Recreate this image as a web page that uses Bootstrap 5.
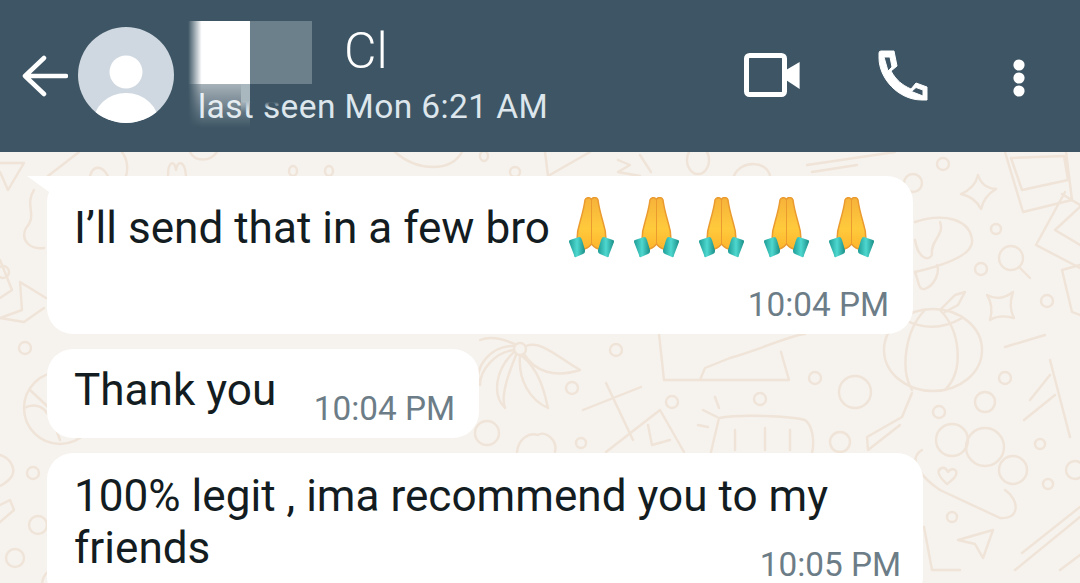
<!DOCTYPE html>
<html lang="en">
<head>
  <meta charset="UTF-8" />
  <title>Chat</title>
  <link href="https://cdn.jsdelivr.net/npm/bootstrap@5.3.0/dist/css/bootstrap.min.css" rel="stylesheet" />
  <style>
    body { background: #f6f2ee; font-family: Roboto, "Liberation Sans", sans-serif; }
    .chat-page { height: 583px; }
    .chat-head { height: 152px; background: #3d5564; color: #fff; padding-left: 22px; flex-shrink: 0; }
    .avatar-pic { margin-left: 10px; width: 96px; height: 96px; margin-top: -2px; }
    .peer-info { margin-left: 24px; width: 420px; }
    .peer-name { font-size: 50px; font-weight: 300; line-height: 56px; padding-left: 146px; margin-top: -4px; }
    .peer-seen { font-size: 33.5px; line-height: 36px; color: #dce6ec; margin-top: 10px; white-space: nowrap; letter-spacing: .4px; }
    .blur-white { position: absolute; left: 188px; top: 21px; width: 62px; height: 63px; background: linear-gradient(90deg, rgba(255,255,255,0), #fff 22%); }
    .blur-gray { position: absolute; left: 250px; top: 21px; width: 62px; height: 63px; background: #6b808b; }
    .blur-fade { position: absolute; left: 188px; top: 84px; width: 62px; height: 44px; background: linear-gradient(90deg, rgba(61,85,100,0), rgba(255,255,255,.55) 22%); -webkit-mask-image: linear-gradient(#000, transparent); mask-image: linear-gradient(#000, transparent); }
    .blur-patch { position: absolute; left: 241px; top: 84px; width: 9px; height: 28px; background: linear-gradient(#a9b7bf 60%, rgba(110,130,142,0)); }
    .blur-hole { position: absolute; left: 250px; top: 84px; width: 31px; height: 24px; background: linear-gradient(#3d5564 75%, rgba(61,85,100,0)); }
    .head-icons { position: absolute; left: 744px; top: 50px; }
    .icon-video { margin-top: 3px; }
    .icon-phone { margin-left: 78px; }
    .icon-dots { margin-left: 85px; margin-top: 9px; }
    .chat-body { flex: 1; padding: 24px 0 0 47px; gap: 15px; overflow: hidden; }
    .doodle-bg { position: absolute; left: 0; top: 152px; }
    .msg-bubble { background: #fff; border-radius: 26px; color: #131c21; font-size: 44.1px; line-height: 52px; position: relative; flex-shrink: 0; }
    .msg-tail::before { content: ""; position: absolute; left: -20px; top: 0; width: 44px; height: 32px; background: #fff; clip-path: polygon(0 0, 100% 0, 100% 100%); }
    .msg-time { font-size: 33.3px; line-height: 36px; color: #6c7d87; white-space: nowrap; }
    .msg-one { width: 866px; height: 158px; padding: 21px 24px 0 27px; }
    .msg-one .msg-time { margin-top: 29px; }
    .msg-two { width: 432px; height: 89px; padding: 15px 24px 0 27px; }
    .msg-two .msg-time { margin-top: 27px; }
    .msg-three { width: 876px; height: 150px; padding: 17px 22px 0 27px; }
    .msg-three .msg-time { margin-top: 25px; }
    .pray-row { gap: 20px; margin-left: 19px; }
    .msg-line { white-space: nowrap; }
  </style>
</head>
<body>
  <div class="chat-page d-flex flex-column position-relative overflow-hidden">
    <!-- header -->
    <header class="chat-head d-flex align-items-center position-relative">
      <svg width="46" height="42" viewBox="0 0 46 42" fill="none" stroke="#fff" stroke-width="4.5" stroke-linecap="round" stroke-linejoin="round"><path d="M44 21H4M22 3 3 21l19 18"/></svg>
      <svg class="avatar-pic" viewBox="0 0 96 96"><defs><clipPath id="avaClip"><circle cx="48" cy="48" r="48"/></clipPath></defs><circle cx="48" cy="48" r="48" fill="#cfd8e0"/><circle cx="48" cy="45" r="16.5" fill="#fff"/><ellipse cx="48" cy="97" rx="33" ry="31" fill="#fff" clip-path="url(#avaClip)"/></svg>
      <div class="peer-info">
        <div class="peer-name">Cl</div>
        <div class="peer-seen">last seen Mon 6:21 AM</div>
      </div>
      <div class="blur-fade"></div>
      <div class="blur-patch"></div>
      <div class="blur-hole"></div>
      <div class="blur-white"></div>
      <div class="blur-gray"></div>
      <div class="head-icons d-flex align-items-start">
        <svg class="icon-video" width="56" height="44" viewBox="0 0 56 44"><rect x="2.5" y="2.5" width="38" height="39" rx="3" fill="none" stroke="#fff" stroke-width="5"/><path d="M42 17 55.6 9v27L42 27z" fill="#fff"/></svg>
        <svg class="icon-phone" width="50" height="51" viewBox="0 0 50 51"><path fill="#fff" fill-rule="evenodd" stroke="#fff" stroke-linejoin="round" d="M1 3Q1 1 3 1H16L19 16 13 21C18 30 24 35 33 39L38 33 49 37V50H44C20 50 1 28 1 8ZM6 7 10 21 14 17 12 7ZM33.500 41.500 45 46V40L38 37.500Z"/></svg>
        <svg class="icon-dots" width="12" height="38" viewBox="0 0 12 38" fill="#fff"><circle cx="6" cy="6" r="5.6"/><circle cx="6" cy="19" r="5.6"/><circle cx="6" cy="32" r="5.6"/></svg>
      </div>
    </header>

    <!-- wallpaper doodles, coordinates are page pixels -->
    <svg class="doodle-bg" width="1080" height="431" viewBox="0 152 1080 431" fill="none" stroke="#efe4d7" stroke-width="2.4" stroke-linejoin="round" stroke-linecap="round">
      <!-- top strip -->
      <path d="M48 176 79 152M122 152C128 160 128 170 126 176M90 176C93 165 102 165 108 176M168 176C168 160 175 160 176 170 177 160 185 160 186 176M190 152C195 162 210 162 217 152M395 152C418 172 451 172 462 152M545 152 548 176 590 152M618 160 630 165 618 172 640 176M640 155 651 172M734 176C740 160 767 160 770 176M807 165 895 152M812 172 857 165"/>
      <ellipse cx="293" cy="171" rx="4" ry="5"/><ellipse cx="329" cy="171" rx="4" ry="5"/><ellipse cx="484" cy="156" rx="4" ry="5"/><ellipse cx="515" cy="172" rx="5" ry="5"/><ellipse cx="698" cy="160" rx="11" ry="14"/>
      <!-- left edge -->
      <path d="M0 163H24L8 190 0 172M34 190C24 205 38 215 26 228 20 240 30 250 44 248M0 260 12 290 0 298M0 318 22 310 20 282 46 298M0 318 24 322 44 308M0 455C10 458 16 468 12 476 8 482 4 484 0 486M0 505 10 500 14 510 0 522"/>
      <circle cx="3" cy="272" r="6"/><circle cx="25" cy="348" r="6"/><circle cx="60" cy="408" r="36"/><path d="M24 408C40 400 50 410 60 440M30 390 62 420"/><circle cx="33" cy="473" r="6"/><circle cx="38" cy="525" r="9"/><circle cx="15" cy="558" r="9"/><circle cx="60" cy="585" r="18"/>
      <!-- right top -->
      <circle cx="943" cy="164" r="6"/><circle cx="913" cy="183" r="9"/>
      <path d="M978 175Q982 188 996 189 984 196 981 209 975 197 961 194 975 188 978 175Z"/>
      <path d="M1005 152 1023 212 1072 200 1066 152M1011 158 1022 190 1068 180 1064 156 1011 158M1065 192 1036 245 1080 268M1080 205 1062 194M1082 205 1055 230 1080 245"/>
      <path d="M915 222C945 212 970 220 972 240 974 255 945 265 915 272M940 222C945 235 930 240 932 255 928 262 918 258 915 240M915 272C920 285 918 290 925 289 935 285 940 272 937 265"/>
      <circle cx="996" cy="229" r="5"/><circle cx="981" cy="269" r="6"/><circle cx="1011" cy="258" r="12"/><path d="M1020 268 1030 278"/>
      <path d="M987 295Q1000 302 1013 292 1008 307 1014 318 1000 314 990 320 994 306 987 295Z"/>
      <circle cx="1047" cy="301" r="6"/><path d="M1062 270 1080 265M1062 270 1072 312 1080 315"/>
      <!-- ball and tail -->
      <ellipse cx="933" cy="350" rx="49" ry="41"/><path d="M925 310C905 330 900 370 912 390M940 310C960 330 965 370 945 390M905 320C925 330 945 328 962 318M940 310 955 295 965 292 958 305 945 312M912 393 902 417 867 437 868 450 900 425"/>
      <!-- bottom right -->
      <path d="M1005 347 1045 335M1050 360 1070 437M1030 400 1050 375M1024 420 1055 395M922 450C905 460 925 480 940 490L1000 518C1020 520 1020 500 1005 490M947 484C938 476 936 470 942 468 945 467 947 470 948 472 950 469 954 468 956 471 958 476 952 480 947 484ZM958 540 993 530 983 558 975 544ZM1015 570 1080 517M1022 553 1080 507M924 527 932 570 960 570M1060 570 1080 555"/>
      <circle cx="952" cy="440" r="16"/><circle cx="985" cy="447" r="19"/><circle cx="1013" cy="470" r="14"/>
      <circle cx="985" cy="402" r="10"/><circle cx="1005" cy="378" r="6"/><circle cx="939" cy="412" r="6"/><circle cx="1040" cy="444" r="5"/><circle cx="1048" cy="484" r="5"/><circle cx="952" cy="517" r="5"/><circle cx="1075" cy="470" r="9"/>
      <!-- middle band -->
      <circle cx="616" cy="350" r="6"/><circle cx="572" cy="388" r="6"/><circle cx="815" cy="378" r="6"/><circle cx="855" cy="392" r="16"/><circle cx="760" cy="399" r="6"/><circle cx="672" cy="402" r="6"/><circle cx="487" cy="433" r="12"/><circle cx="581" cy="443" r="5"/><circle cx="840" cy="442" r="10"/><circle cx="520" cy="349" r="6"/>
      <path d="M515 344C500 338 490 336 480 340M526 346C540 340 555 355 580 370 555 378 535 372 524 354M522 356C540 370 545 395 548 408 530 400 518 380 520 356M516 355C510 370 500 395 505 408 492 395 495 370 514 352M514 350C495 352 480 370 480 385 472 370 490 345 514 346"/>
      <path d="M659 334 664 380H789L781 352M700 380 705 368 730 358C760 350 790 335 805 334"/>
      <path d="M583 410 641 387M606 383 633 440M606 452 660 410 684 452M648 425 652 445 670 440"/>
      <path d="M711 452 719 418C740 414 790 416 805 420 812 425 815 440 812 453M703 410 717 417M715 397 719 408M698 425 708 427M735 430V450M765 428V450M790 430V450"/>
      <path d="M517 452C518 440 528 432 538 435 545 430 558 440 555 452"/>
    </svg>

    <!-- messages -->
    <main class="chat-body d-flex flex-column position-relative">
      <div class="msg-bubble msg-tail msg-one">
        <div class="d-flex align-items-center">
          <span class="msg-line">I’ll send that in a few bro</span>
          <div class="pray-row d-flex">
            <svg width="0" height="0" class="position-absolute"><defs>
              <linearGradient id="handGrad" x1="0" y1="0" x2="0" y2="1"><stop offset="0" stop-color="#f6b23a"/><stop offset=".6" stop-color="#ffca3c"/><stop offset="1" stop-color="#fdb52c"/></linearGradient>
              <linearGradient id="cuffGrad" x1="0" y1="0" x2="1" y2="0"><stop offset="0" stop-color="#1f9d96"/><stop offset=".5" stop-color="#4ed8cf"/><stop offset="1" stop-color="#1b8f88"/></linearGradient>
              <symbol id="prayHands" viewBox="0 0 45 61">
                <path d="M16 3c1-3 5-3 6.500-.5C24-.5 28 0 29 3c1 8 3 15 5 22 2 6 3 12 3 18l-6 9c-3 0-6-2-8.500-5-2.500 3-5.500 5-8.500 5L8 43c0-6 1-12 3-18 2-7 4-14 5-22z" fill="url(#handGrad)" stroke="#ea9a2e" stroke-width="1.500"/>
                <path d="M22.500 3v44" stroke="#ea9a2e" stroke-width="1" fill="none"/>
                <path d="M1 43l9-3c2 0 2 1 3 3l3 10c0 2 0 3-2 4l-7 3c-1 .5-2 0-2-2L0 45c0-1 0-2 1-2z" fill="url(#cuffGrad)"/>
                <path d="M44 43l-9-3c-2 0-2 1-3 3l-3 10c0 2 0 3 2 4l7 3c1 .5 2 0 2-2l5-13c0-1 0-2-1-2z" fill="url(#cuffGrad)"/>
              </symbol>
            </defs></svg>
            <svg width="45" height="61"><use href="#prayHands"/></svg>
            <svg width="45" height="61"><use href="#prayHands"/></svg>
            <svg width="45" height="61"><use href="#prayHands"/></svg>
            <svg width="45" height="61"><use href="#prayHands"/></svg>
            <svg width="45" height="61"><use href="#prayHands"/></svg>
          </div>
        </div>
        <div class="msg-time text-end">10:04 PM</div>
      </div>
      <div class="msg-bubble msg-two d-flex">
        <span class="msg-line">Thank you</span>
        <span class="msg-time ms-auto">10:04 PM</span>
      </div>
      <div class="msg-bubble msg-three">
        <div class="msg-line">100% legit , ima recommend you to my</div>
        <div class="d-flex justify-content-between">
          <span class="msg-line">friends</span>
          <span class="msg-time">10:05 PM</span>
        </div>
      </div>
    </main>
  </div>
  <script src="https://cdn.jsdelivr.net/npm/bootstrap@5.3.0/dist/js/bootstrap.bundle.min.js"></script>
</body>
</html>
